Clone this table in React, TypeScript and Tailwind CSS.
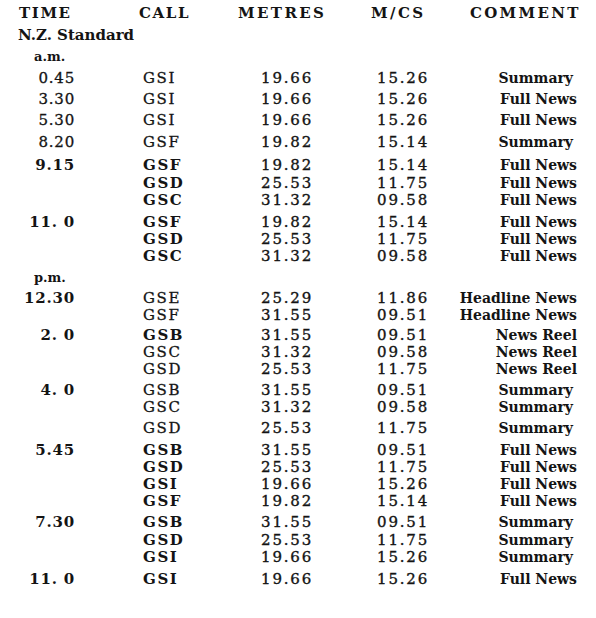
import React from "react";

type Row = {
  t?: string;
  c: string;
  m: string;
  f: string;
  n: string;
  mt: string;
  tb?: boolean;
  cb?: boolean;
};

const rows: Row[] = [
  { t: "0.45", c: "GSI", m: "19.66", f: "15.26", n: "Summary", mt: "mt-[5px]" },
  { t: "3.30", c: "GSI", m: "19.66", f: "15.26", n: "Full News", mt: "mt-[4px]" },
  { t: "5.30", c: "GSI", m: "19.66", f: "15.26", n: "Full News", mt: "mt-[4px]" },
  { t: "8.20", c: "GSF", m: "19.82", f: "15.14", n: "Summary", mt: "mt-[5px]" },
  { t: "9.15", c: "GSF", m: "19.82", f: "15.14", n: "Full News", mt: "mt-[6px]", tb: true, cb: true },
  { c: "GSD", m: "25.53", f: "11.75", n: "Full News", mt: "mt-[1px]", cb: true },
  { c: "GSC", m: "31.32", f: "09.58", n: "Full News", mt: "mt-0", cb: true },
  { t: "11. 0", c: "GSF", m: "19.82", f: "15.14", n: "Full News", mt: "mt-[5px]", tb: true, cb: true },
  { c: "GSD", m: "25.53", f: "11.75", n: "Full News", mt: "mt-0", cb: true },
  { c: "GSC", m: "31.32", f: "09.58", n: "Full News", mt: "mt-0", cb: true },
];

const rowsPm: Row[] = [
  { t: "12.30", c: "GSE", m: "25.29", f: "11.86", n: "Headline News", mt: "mt-[4px]", tb: true },
  { c: "GSF", m: "31.55", f: "09.51", n: "Headline News", mt: "mt-0" },
  { t: "2. 0", c: "GSB", m: "31.55", f: "09.51", n: "News Reel", mt: "mt-[3px]", tb: true, cb: true },
  { c: "GSC", m: "31.32", f: "09.58", n: "News Reel", mt: "mt-0" },
  { c: "GSD", m: "25.53", f: "11.75", n: "News Reel", mt: "mt-0" },
  { t: "4. 0", c: "GSB", m: "31.55", f: "09.51", n: "Summary", mt: "mt-[4px]", tb: true },
  { c: "GSC", m: "31.32", f: "09.58", n: "Summary", mt: "mt-0" },
  { c: "GSD", m: "25.53", f: "11.75", n: "Summary", mt: "mt-[4px]" },
  { t: "5.45", c: "GSB", m: "31.55", f: "09.51", n: "Full News", mt: "mt-[5px]", tb: true, cb: true },
  { c: "GSD", m: "25.53", f: "11.75", n: "Full News", mt: "mt-0", cb: true },
  { c: "GSI", m: "19.66", f: "15.26", n: "Full News", mt: "mt-0", cb: true },
  { c: "GSF", m: "19.82", f: "15.14", n: "Full News", mt: "mt-0", cb: true },
  { t: "7.30", c: "GSB", m: "31.55", f: "09.51", n: "Summary", mt: "mt-[4px]", tb: true, cb: true },
  { c: "GSD", m: "25.53", f: "11.75", n: "Summary", mt: "mt-[1px]", cb: true },
  { c: "GSI", m: "19.66", f: "15.26", n: "Summary", mt: "mt-0", cb: true },
  { t: "11. 0", c: "GSI", m: "19.66", f: "15.26", n: "Full News", mt: "mt-[5px]", tb: true, cb: true },
];

function DataRow({ r }: { r: Row }) {
  return (
    <div className={`${r.mt} flex h-[17px] items-center pr-[19px] text-[15px] leading-[17px]`}>
      <div
        className={`w-[75px] shrink-0 text-right tracking-[0.8px] ${
          r.tb ? "font-bold" : "font-normal [-webkit-text-stroke:0.3px_#141414]"
        }`}
      >
        {r.t ?? ""}
      </div>
      <div
        className={`ml-[68px] w-[100px] shrink-0 tracking-[1.6px] ${
          r.cb ? "font-bold" : "font-normal [-webkit-text-stroke:0.3px_#141414]"
        }`}
      >
        {r.c}
      </div>
      <div className="w-[70px] shrink-0 text-right tracking-[1.8px] [-webkit-text-stroke:0.35px_#141414]">
        {r.m}
      </div>
      <div className="w-[116px] shrink-0 text-right tracking-[1.8px] [-webkit-text-stroke:0.35px_#141414]">
        {r.f}
      </div>
      <div
        className={`flex-1 text-right text-[14px] font-bold ${
          r.n === "Summary" ? "pr-[4px]" : ""
        }`}
      >
        {r.n}
      </div>
    </div>
  );
}

export default function App() {
  return (
    <div className="min-h-[618px] w-[596px] bg-white pt-[5px] text-[#141414] [font-family:'DejaVu_Serif',serif]">
      <div className="flex h-[17px] items-center text-[15px] font-bold leading-[17px]">
        <div className="ml-[19px] w-[120px] shrink-0 tracking-[1.6px]">TIME</div>
        <div className="w-[99px] shrink-0 tracking-[1.6px]">CALL</div>
        <div className="w-[133px] shrink-0 tracking-[2.4px]">METRES</div>
        <div className="w-[99px] shrink-0 tracking-[2.4px]">M/CS</div>
        <div className="shrink-0 tracking-[2.3px]">COMMENT</div>
      </div>
      <div className="mt-[5px] h-[17px] pl-[18px] text-[15px] font-bold leading-[17px]">
        N.Z. Standard
      </div>
      <div className="mt-[4px] h-[17px] pl-[34px] text-[13px] font-bold leading-[17px]">
        a.m.
      </div>
      {rows.map((r, i) => (
        <DataRow key={"a" + i} r={r} />
      ))}
      <div className="mt-[4px] h-[17px] pl-[34px] text-[13px] font-bold leading-[17px]">
        p.m.
      </div>
      {rowsPm.map((r, i) => (
        <DataRow key={"p" + i} r={r} />
      ))}
    </div>
  );
}
